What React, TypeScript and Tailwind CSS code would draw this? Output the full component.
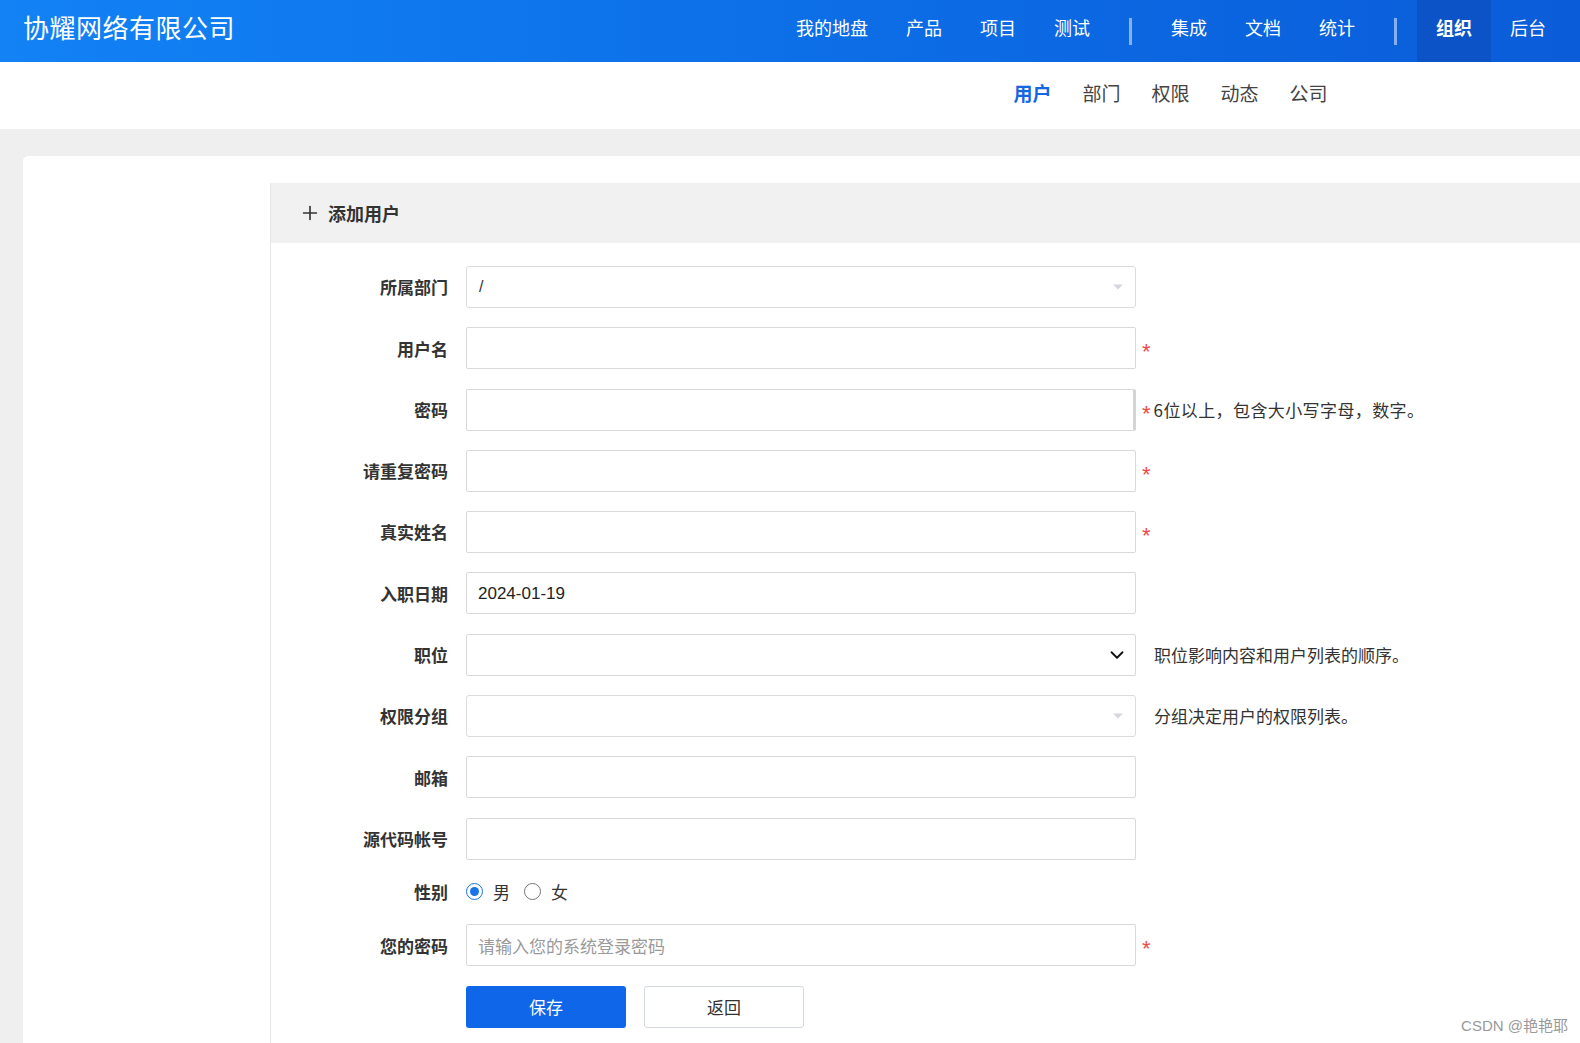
import { ChevronDown, Plus } from "lucide-react";

const font = {
  fontFamily: '"Noto Sans CJK SC", "Noto Sans", "Liberation Sans", sans-serif',
};

const latin = {
  fontFamily: '"Liberation Sans", "Noto Sans CJK SC", sans-serif',
};

const mainNav = [
  ["我的地盘", "产品", "项目", "测试"],
  ["集成", "文档", "统计"],
];

const subNav = ["用户", "部门", "权限", "动态", "公司"];

function Divider() {
  return <span className="mx-[20px] h-[27px] w-[3px] bg-[#ffffff]/50" />;
}

function Triangle() {
  return (
    <span className="absolute right-[12px] top-1/2 -translate-y-1/2 h-0 w-0 border-x-[5px] border-t-[5px] border-x-transparent border-t-[#d6d6de]" />
  );
}

function Required({ hint }: { hint?: string }) {
  return (
    <div className="flex items-center pl-[6px] text-[17px] text-[#333]">
      <span className="pt-[8px] text-[22px] leading-none text-[#f04848]" style={latin}>
        *
      </span>
      {hint && <span className="ml-[3px] tracking-[0.4px]">{hint}</span>}
    </div>
  );
}

function Hint({ text }: { text: string }) {
  return <div className="pl-[18px] text-[17px] text-[#333]">{text}</div>;
}

function Label({ text }: { text: string }) {
  return (
    <div className="w-[195px] shrink-0 pr-[18px] text-right text-[17px] font-bold text-[#333]">
      {text}
    </div>
  );
}

function Row({
  label,
  children,
  extra,
}: {
  label: string;
  children: React.ReactNode;
  extra?: React.ReactNode;
}) {
  return (
    <div className="flex h-[42px] items-center">
      <Label text={label} />
      {children}
      {extra}
    </div>
  );
}

function TextBox({ value, placeholder, thickRight }: { value?: string; placeholder?: string; thickRight?: boolean }) {
  return (
    <div
      className={`flex h-[42px] w-[670px] shrink-0 items-center rounded-[2px] border border-[#d9d9d9] bg-white px-[11px] ${
        thickRight ? "border-r-[3px] border-r-[#d4d4d4]" : ""
      }`}
    >
      {value && (
        <span className="text-[17px] text-[#222]" style={latin}>
          {value}
        </span>
      )}
      {placeholder && <span className="text-[17px] text-[#9a9a9a]">{placeholder}</span>}
    </div>
  );
}

function ChosenBox({ value }: { value?: string }) {
  return (
    <div
      className="relative flex h-[42px] w-[670px] shrink-0 items-center rounded-[3px] border border-[#dcdcdc] bg-white px-[12px] text-[16px] text-[#333]"
      style={latin}
    >
      {value}
      <Triangle />
    </div>
  );
}

export default function App() {
  return (
    <div className="relative min-h-[1043px] bg-[#efefef]" style={font}>
      {/* top bar */}
      <header className="flex h-[62px] items-center bg-gradient-to-r from-[#1282f5] to-[#0b5cd9] pr-[15px] text-white">
        <div className="pl-[23px] pb-[10px] text-[26px] tracking-[0.5px]">协耀网络有限公司</div>
        <nav className="ml-auto flex h-full items-center text-[18px]">
          {mainNav[0].map((n) => (
            <a key={n} className="px-[19px] pb-[7px]">
              {n}
            </a>
          ))}
          <Divider />
          {mainNav[1].map((n) => (
            <a key={n} className="px-[19px] pb-[7px]">
              {n}
            </a>
          ))}
          <Divider />
          <a className="flex h-full items-center bg-[#0b53c6] px-[19px] pb-[7px] font-bold">组织</a>
          <a className="px-[19px] pb-[7px]">后台</a>
        </nav>
      </header>

      {/* sub nav */}
      <div className="flex h-[67px] items-center justify-end bg-white pr-[237px] pb-[4px] text-[19px] text-[#444]">
        {subNav.map((n, i) => (
          <a key={n} className={`px-[15.5px] ${i === 0 ? "font-bold text-[#1566e2]" : ""}`}>
            {n}
          </a>
        ))}
      </div>

      {/* content */}
      <div className="pt-[27px] pl-[23px]">
        <div className="min-h-[887px] rounded-tl-[5px] bg-white pt-[27px] pl-[247px]">
          <div className="min-h-[860px] border-l border-[#e6e6e6]">
            <div className="flex h-[60px] items-center bg-[#f1f1f1] pl-[28px] text-[18px] font-bold text-[#333]">
              <Plus size={22} strokeWidth={1.8} className="mr-[7px]" />
              添加用户
            </div>

            <div className="flex flex-col gap-[19.3px] pt-[23px]">
              <Row label="所属部门">
                <ChosenBox value="/" />
              </Row>
              <Row label="用户名" extra={<Required />}>
                <TextBox />
              </Row>
              <Row label="密码" extra={<Required hint="6位以上，包含大小写字母，数字。" />}>
                <TextBox thickRight />
              </Row>
              <Row label="请重复密码" extra={<Required />}>
                <TextBox />
              </Row>
              <Row label="真实姓名" extra={<Required />}>
                <TextBox />
              </Row>
              <Row label="入职日期">
                <TextBox value="2024-01-19" />
              </Row>
              <Row label="职位" extra={<Hint text="职位影响内容和用户列表的顺序。" />}>
                <div className="flex h-[42px] w-[670px] shrink-0 items-center justify-end rounded-[2px] border border-[#d9d9d9] bg-white pr-[7px]">
                  <ChevronDown size={22} strokeWidth={2} className="text-[#111]" />
                </div>
              </Row>
              <Row label="权限分组" extra={<Hint text="分组决定用户的权限列表。" />}>
                <ChosenBox />
              </Row>
              <Row label="邮箱">
                <TextBox />
              </Row>
              <Row label="源代码帐号">
                <TextBox />
              </Row>
              <div className="flex h-[26px] items-center">
                <Label text="性别" />
                <label className="flex items-center text-[17px] text-[#333]">
                  <span className="flex h-[17px] w-[17px] items-center justify-center rounded-full border-[1.5px] border-[#1a73e8]">
                    <span className="h-[9px] w-[9px] rounded-full bg-[#1a73e8]" />
                  </span>
                  <span className="ml-[10px]">男</span>
                </label>
                <label className="ml-[14px] flex items-center text-[17px] text-[#333]">
                  <span className="h-[17px] w-[17px] rounded-full border-[1.5px] border-[#767676]" />
                  <span className="ml-[10px]">女</span>
                </label>
              </div>
              <Row label="您的密码" extra={<Required />}>
                <TextBox placeholder="请输入您的系统登录密码" />
              </Row>
              <div className="flex h-[42px] items-center pl-[195px]">
                <button className="h-[42px] w-[160px] rounded-[3px] bg-[#0f66e8] text-[17px] text-white">保存</button>
                <button className="ml-[18px] h-[42px] w-[160px] rounded-[3px] border border-[#d3d7de] bg-white text-[17px] text-[#333]">
                  返回
                </button>
              </div>
            </div>
          </div>
        </div>
      </div>

      <div className="absolute bottom-[6px] right-[12px] text-[15px] text-[#9a9a9a]">
        <span style={latin}>CSDN @</span>艳艳耶
      </div>
    </div>
  );
}
